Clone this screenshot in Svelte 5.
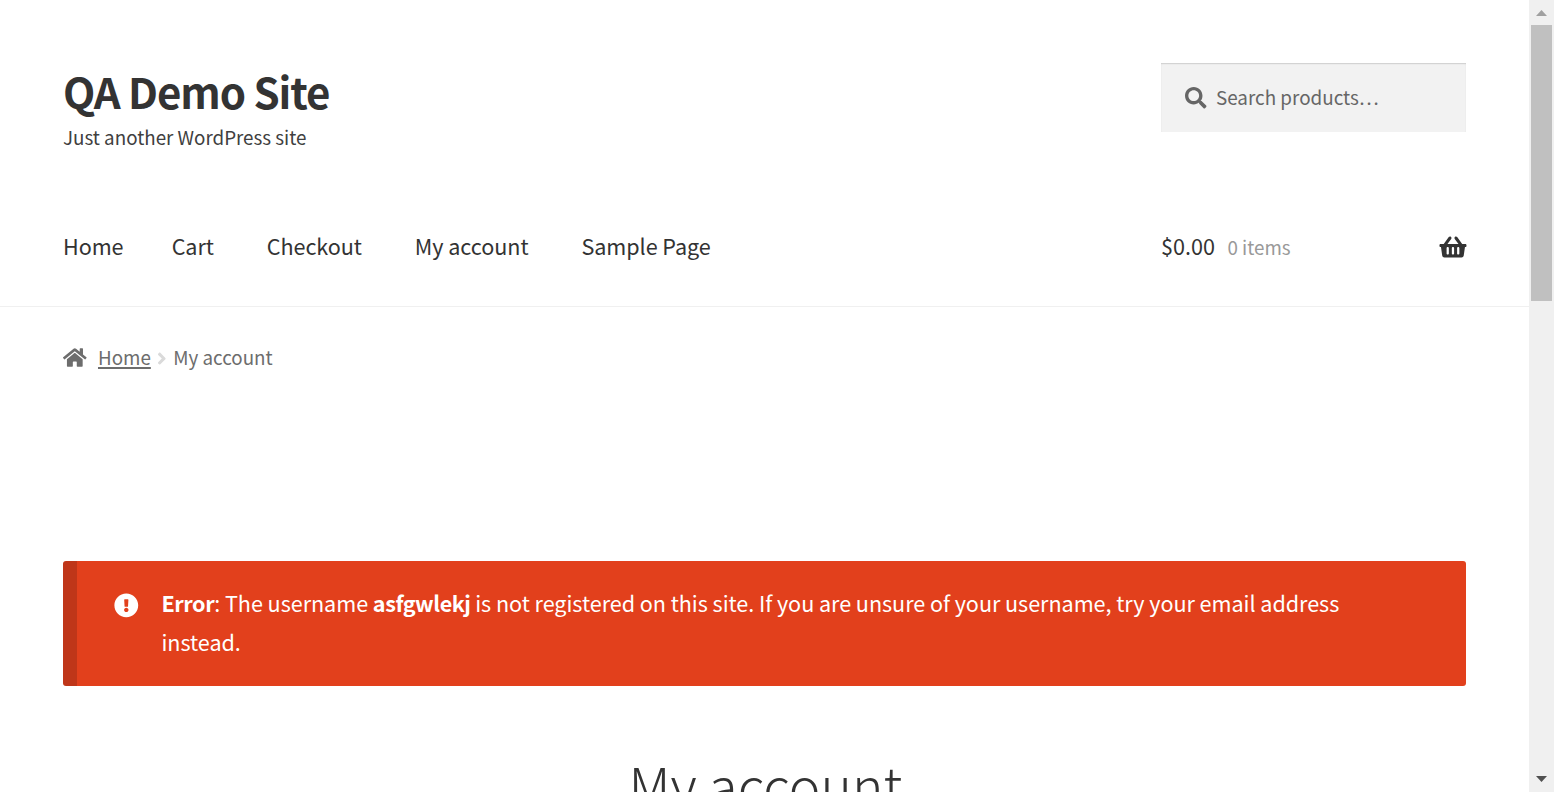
<script>
  const nav = ['Home', 'Cart', 'Checkout', 'My account', 'Sample Page'];
</script>

<div class="window">
  <div class="page">
    <header>
      <div class="top">
        <div class="brand">
          <h1>QA Demo Site</h1>
          <p>Just another WordPress site</p>
        </div>
        <div class="search">
          <svg viewBox="0 0 512 512" width="21.5" height="21.5"><path d="M505 442.7L405.3 343c-4.5-4.5-10.6-7-17-7H372c27.6-35.3 44-79.7 44-128C416 93.1 322.9 0 208 0S0 93.1 0 208s93.1 208 208 208c48.3 0 92.7-16.4 128-44v16.3c0 6.4 2.5 12.5 7 17l99.7 99.7c9.4 9.4 24.6 9.4 33.9 0l28.3-28.3c9.4-9.4 9.4-24.6.1-34zM208 336c-70.7 0-128-57.2-128-128 0-70.7 57.2-128 128-128 70.7 0 128 57.2 128 128 0 70.7-57.2 128-128 128z" /></svg>
          <span>Search products…</span>
        </div>
      </div>
      <div class="bar">
        <nav>
          {#each nav as item}<span class="link">{item}</span>{/each}
        </nav>
        <div class="cart">
          <span>$0.00</span>
          <span class="count">0 items</span>
          <svg viewBox="-10 0 576 512" width="27" height="24"><path d="M576 216v16c0 13.255-10.745 24-24 24h-8l-26.113 182.788C514.509 462.435 494.257 480 470.37 480H105.63c-23.887 0-44.139-17.565-47.518-41.212L32 256h-8c-13.255 0-24-10.745-24-24v-16c0-13.255 10.745-24 24-24h67.341l106.78-146.821c10.395-14.292 30.407-17.453 44.701-7.058 14.293 10.395 17.453 30.408 7.058 44.701L170.477 192h235.046L326.12 82.821c-10.395-14.292-7.234-34.306 7.059-44.701 14.291-10.395 34.306-7.235 44.701 7.058L484.659 192H552c13.255 0 24 10.745 24 24zM312 392V280c0-13.255-10.745-24-24-24s-24 10.745-24 24v112c0 13.255 10.745 24 24 24s24-10.745 24-24zm112 0V280c0-13.255-10.745-24-24-24s-24 10.745-24 24v112c0 13.255 10.745 24 24 24s24-10.745 24-24zm-224 0V280c0-13.255-10.745-24-24-24s-24 10.745-24 24v112c0 13.255 10.745 24 24 24s24-10.745 24-24z" /></svg>
        </div>
      </div>
    </header>

    <div class="crumbs">
      <svg class="home" viewBox="0 0 576 512" width="23.6" height="21"><path d="M280.37 148.26L96 300.11V464a16 16 0 0 0 16 16l112.06-.29a16 16 0 0 0 15.92-16V368a16 16 0 0 1 16-16h64a16 16 0 0 1 16 16v95.64a16 16 0 0 0 16 16.05L464 480a16 16 0 0 0 16-16V300L295.67 148.26a12.19 12.19 0 0 0-15.3 0zM571.6 251.47L488 182.56V44.05a12 12 0 0 0-12-12h-56a12 12 0 0 0-12 12v72.61L318.47 43a48 48 0 0 0-61 0L4.34 251.47a12 12 0 0 0-1.6 16.9l25.5 31A12 12 0 0 0 45.15 301l235.22-193.74a12.19 12.19 0 0 1 15.3 0L530.9 301a12 12 0 0 0 16.9-1.6l25.5-31a12 12 0 0 0-1.7-16.93z" /></svg>
      <span class="back">Home</span>
      <svg class="angle" viewBox="0 0 256 512" width="9.6" height="19.2"><path d="M224.3 273l-136 136c-9.4 9.4-24.6 9.4-33.9 0l-22.6-22.6c-9.4-9.4-9.4-24.6 0-33.9l96.4-96.4-96.4-96.4c-9.4-9.4-9.4-24.6 0-33.9L54.3 103c9.4-9.4 24.6-9.4 33.9 0l136 136c9.5 9.4 9.5 24.6.1 34z" /></svg>
      <span>My account</span>
    </div>

    <div class="error">
      <svg viewBox="0 0 512 512" width="24.6" height="24.6"><path d="M504 256c0 136.997-111.043 248-248 248S8 392.997 8 256C8 119.083 119.043 8 256 8s248 111.083 248 248zm-248 50c-25.405 0-46 20.595-46 46s20.595 46 46 46 46-20.595 46-46-20.595-46-46-46zm-43.673-165.346l7.418 136c.347 6.364 5.609 11.346 11.982 11.346h48.546c6.373 0 11.635-4.982 11.982-11.346l7.418-136c.375-6.874-5.098-12.654-11.982-12.654h-63.383c-6.884 0-12.356 5.78-11.981 12.654z" /></svg>
      <p><strong>Error</strong>: The username <strong>asfgwlekj</strong> is not registered on this site. If you are unsure of your username, try your email address instead.</p>
    </div>

    <h2>My account</h2>
  </div>
  <div class="scroll">
    <svg viewBox="0 0 25 25" width="25" height="25"><path d="M7 16h11l-5.5-6z" fill="#a0a0a0" /></svg>
    <div class="thumb"></div>
    <svg viewBox="0 0 25 25" width="25" height="25"><path d="M7 9h11l-5.5 6z" fill="#505050" /></svg>
  </div>
</div>

<style>
  :global(body) { margin: 0; background: #fff; overflow: hidden; }
  .window { display: flex; width: 1554px; height: 792px; overflow: hidden; font-family: "Noto Sans CJK SC", "Noto Sans", sans-serif; font-size: 21.6px; color: #333; }
  h1, h2, p { margin: 0; }
  svg { display: block; flex: none; overflow: visible; fill: currentColor; }
  .page { width: 1529px; height: 792px; overflow: hidden; }
  header { box-sizing: border-box; height: 307px; padding: 63px 63px 0; border-bottom: 1px solid #f0f0f0; }
  .top { display: flex; justify-content: space-between; height: 163px; }
  .brand { padding-top: 3px; }
  h1 { font-size: 42px; line-height: 50px; font-weight: 700; letter-spacing: -1.07px; }
  .brand p { margin-top: 6px; font-size: 18.8px; line-height: 30px; color: #404040; }
  .search { box-sizing: border-box; display: flex; align-items: center; width: 305px; height: 69px; padding-left: 24px; gap: 9.5px; background: #f2f2f2; color: #666; font-size: 18.85px; box-shadow: inset 0 2px 1px -1px rgba(0,0,0,.09), inset 0 1px 2px rgba(0,0,0,.07); }
  .search span { line-height: 28px; padding-bottom: 2px; }
  .bar { display: flex; justify-content: space-between; line-height: 40px; }
  nav { display: flex; gap: 52.9px; letter-spacing: -.06px; }
  .link:first-child { margin-right: -4.8px; }
  .cart { display: flex; width: 305px; }
  .count { margin-left: 12.5px; padding-top: 1px; font-size: 18.8px; color: #999; }
  .cart svg { margin: 9px 0 0 auto; }
  .crumbs { display: flex; align-items: center; height: 30px; margin: 35px 63px 0; font-size: 18.8px; line-height: 30px; color: #6d6d6d; }
  .back { margin-left: 11.4px; text-decoration: underline; text-decoration-thickness: 2px; text-underline-offset: 2px; }
  .angle { margin: 4px 6.2px 0 6.6px; color: #dadada; }
  .error { box-sizing: border-box; display: flex; height: 125px; margin: 189px 63px 0; padding: 22px 100px 0 36.6px; border-left: 14px solid #bf3619; border-radius: 3px; background: #e2401c; color: #fff; line-height: 39px; letter-spacing: -.05px; }
  .error svg { margin: 9.6px 23.3px 0 0; }
  .error strong { letter-spacing: -.41px; }
  h2 { margin-top: 58px; padding-left: 2px; text-align: center; font-size: 53.4px; line-height: 80px; font-weight: 300; }
  .scroll { display: flex; flex-direction: column; width: 25px; background: #f0f0f0; }
  .thumb { width: 21px; height: 276px; margin: 0 2px auto; background: #c0c0c0; }
</style>
